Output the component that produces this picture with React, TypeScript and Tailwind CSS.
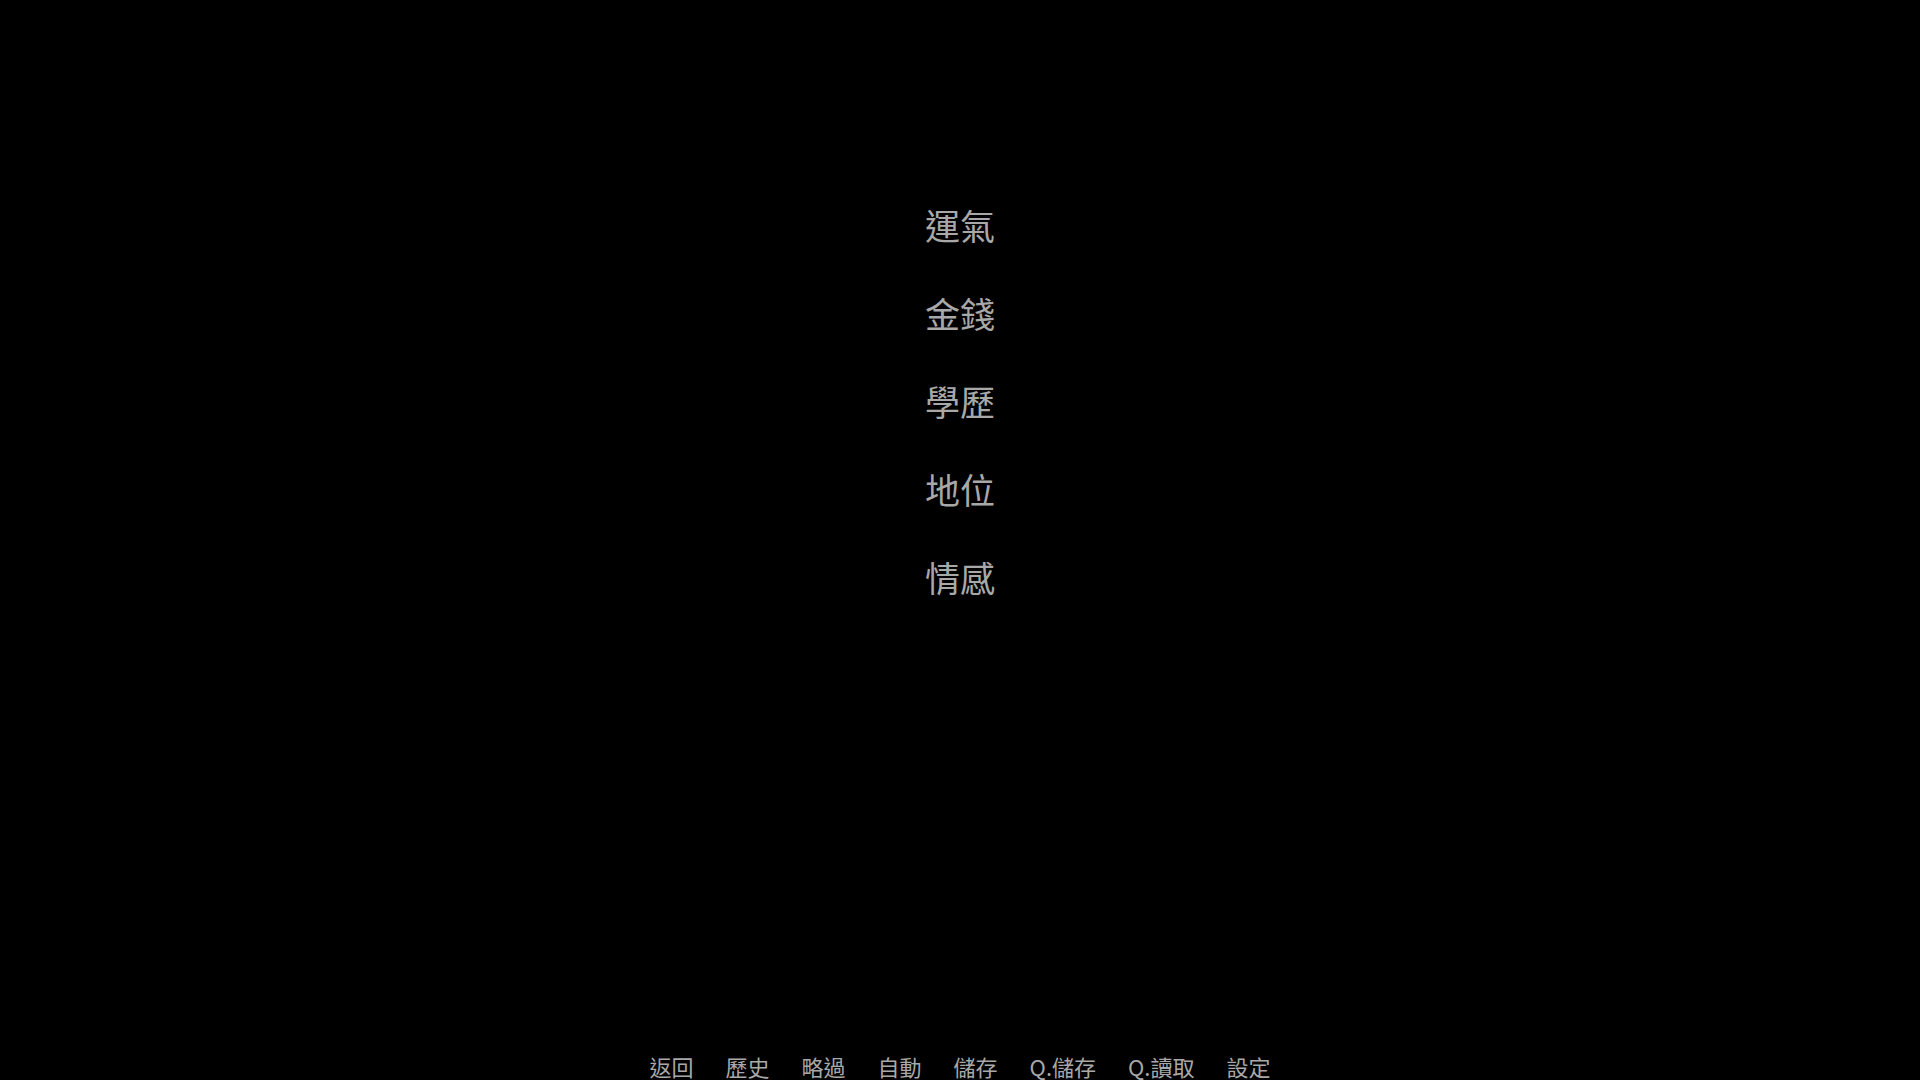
const choices = ['運氣', '金錢', '學歷', '地位', '情感']

const quickMenu = ['返回', '歷史', '略過', '自動', '儲存', 'Q.儲存', 'Q.讀取', '設定']

export default function App() {
  return (
    <div
      className="flex h-screen w-full flex-col items-center overflow-hidden bg-black text-[#a8a8a8]"
      style={{ fontFamily: '"Noto Sans CJK TC", "Noto Sans CJK SC", sans-serif' }}
    >
      <div className="mt-[207px] flex flex-col items-center gap-[53px]">
        {choices.map((c) => (
          <button key={c} type="button" className="text-[35px] leading-none">
            {c}
          </button>
        ))}
      </div>

      <div className="mt-auto flex items-center gap-[32px] text-[22px] leading-[27px]">
        {quickMenu.map((q) => (
          <button key={q} type="button">
            {q}
          </button>
        ))}
      </div>
    </div>
  )
}
